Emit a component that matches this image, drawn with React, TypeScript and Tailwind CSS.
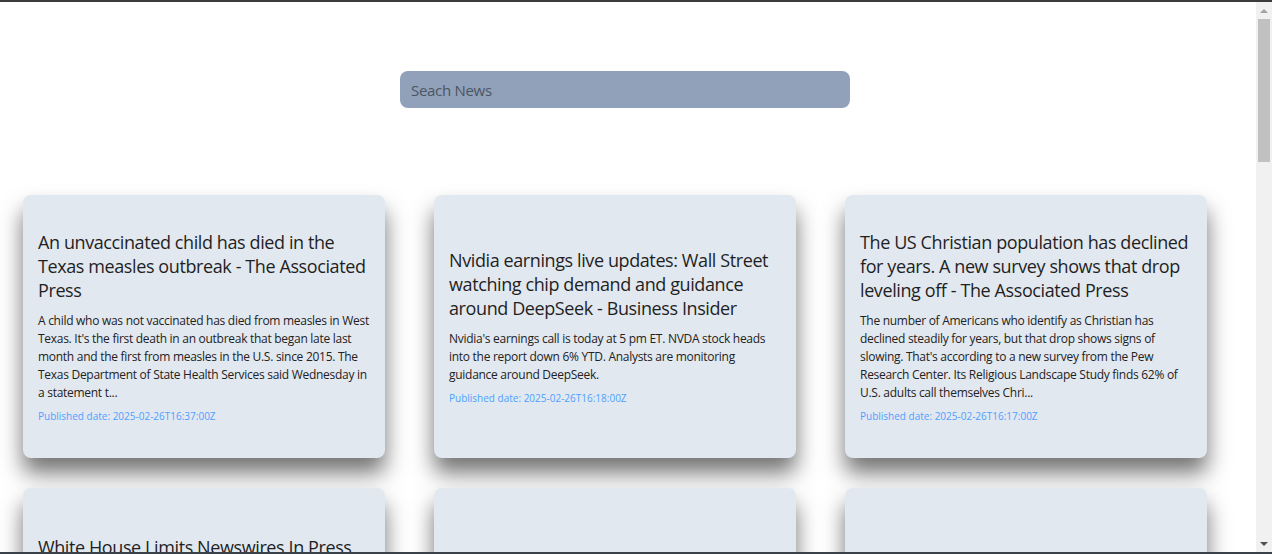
const articles = [
  {
    title: "An unvaccinated child has died in the Texas measles outbreak - The Associated Press",
    description:
      "A child who was not vaccinated has died from measles in West Texas. It's the first death in an outbreak that began late last month and the first from measles in the U.S. since 2015. The Texas Department of State Health Services said Wednesday in a statement t...",
    publishedAt: "2025-02-26T16:37:00Z",
  },
  {
    title: "Nvidia earnings live updates: Wall Street watching chip demand and guidance around DeepSeek - Business Insider",
    description:
      "Nvidia's earnings call is today at 5 pm ET. NVDA stock heads into the report down 6% YTD. Analysts are monitoring guidance around DeepSeek.",
    publishedAt: "2025-02-26T16:18:00Z",
  },
  {
    title: "The US Christian population has declined for years. A new survey shows that drop leveling off - The Associated Press",
    description:
      "The number of Americans who identify as Christian has declined steadily for years, but that drop shows signs of slowing. That's according to a new survey from the Pew Research Center. Its Religious Landscape Study finds 62% of U.S. adults call themselves Chri...",
    publishedAt: "2025-02-26T16:17:00Z",
  },
  {
    title: "White House Limits Newswires In Press Pool - Forbes",
    description:
      "The White House said it will limit the number of wire service reporters in the press pool, a move that cuts the slots long held by the Associated Press, Reuters and Bloomberg. The new policy gives the press office control over which outlets cover the presi...",
    publishedAt: "2025-02-26T16:10:00Z",
  },
  { title: "", description: "", publishedAt: "" },
  { title: "", description: "", publishedAt: "" },
];

function NewsCard({ title, description, publishedAt }: { title: string; description: string; publishedAt: string }) {
  return <div className="flex h-[263px] w-[362px] flex-col justify-center rounded-lg bg-[#e2e8f0] px-[15px] shadow-[0_15px_22px_rgba(0,0,0,0.55)]">
    {title && <h2 className="text-[18px] leading-6 tracking-[-0.4px] text-[#1f1f1f]">{title}</h2>}
    {description && <p className="mt-2.5 text-[12px] leading-[18px] tracking-[-0.28px] text-[#222]">{description}</p>}
    {publishedAt && <p className="mt-[7px] text-[10px] leading-[15px] text-[#4ea0ff]">Published date: {publishedAt}</p>}
  </div>;
}

export default function App() {
  return <div className="flex h-[554px] flex-col overflow-hidden border-y-2 border-t-[#3c3c3c] border-b-[#3b4148] bg-white font-['Open_Sans',sans-serif]">
    <div className="flex min-h-0 flex-1">
      <main className="min-w-0 flex-1 overflow-hidden">
        <div className="flex justify-center pr-[6px] pt-[69px]">
          <input
            className="h-[37px] w-[450px] rounded-lg bg-[#91a1b9] px-[11px] text-[15px] tracking-[-0.3px] text-[#374151] placeholder:text-[#4b5563] outline-none"
            placeholder="Seach News"
          />
        </div>
        <div className="mt-[87px] grid grid-cols-[repeat(3,362px)] gap-x-[49px] gap-y-[30px] pl-[23px]">
          {articles.map((a, i) => <NewsCard key={i} {...a} />)}
        </div>
      </main>
      <div className="flex w-4 flex-col bg-[#f1f1f1]">
        <div className="flex h-[17px] items-center justify-center">
          <div className="h-0 w-0 border-x-4 border-b-4 border-x-transparent border-b-[#a3a3a3]" />
        </div>
        <div className="mx-[2px] h-[143px] bg-[#c1c1c1]" />
        <div className="flex-1" />
        <div className="flex h-[17px] items-center justify-center">
          <div className="h-0 w-0 border-x-4 border-t-4 border-x-transparent border-t-[#505050]" />
        </div>
      </div>
    </div>
  </div>;
}
